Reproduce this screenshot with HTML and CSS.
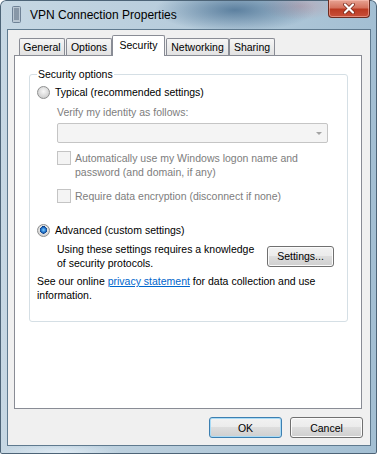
FILE: index.html
```html
<!DOCTYPE html>
<html lang="en">
<head>
    <meta charset="UTF-8">
    <title>VPN Connection Properties</title>
    <link rel="stylesheet" href="styles.css">
</head>
<body>
    <div class="window">
        <div class="titlebar">
            <svg class="title-icon" width="9" height="17" viewBox="0 0 9 17">
                <rect x="0.5" y="0.5" width="8" height="16" rx="1" fill="#b9c6d2" stroke="#6f8296"/>
                <path d="M2 3h5M2 5h5M2 7h5M2 9h5M2 11h5M2 13h5" stroke="#56697d" stroke-width="1"/>
            </svg>
            <span class="title-text">VPN Connection Properties</span>
            <div class="close-btn">
                <svg width="14" height="11" viewBox="0 0 14 11">
                    <path d="M3 1.5l8 8M11 1.5l-8 8" stroke="#7a2a1c" stroke-width="3.8" stroke-linecap="round"/>
                    <path d="M3 1.5l8 8M11 1.5l-8 8" stroke="#ffffff" stroke-width="2.2" stroke-linecap="round"/>
                </svg>
            </div>
        </div>

        <div class="client">
            <!-- Tab strip -->
            <div class="tabs">
                <div class="tab tab-general">General</div>
                <div class="tab tab-options">Options</div>
                <div class="tab tab-security active">Security</div>
                <div class="tab tab-networking">Networking</div>
                <div class="tab tab-sharing">Sharing</div>
            </div>

            <div class="panel">
                <fieldset class="group">
                    <legend>Security options</legend>

                    <div class="option">
                        <span class="radio"></span>
                        <span>Typical (recommended settings)</span>
                    </div>

                    <div class="sub">
                        <div class="label disabled">Verify my identity as follows:</div>
                        <div class="select"><span class="arrow"></span></div>

                        <div class="check-row first-check">
                            <span class="checkbox"></span>
                            <span class="disabled">Automatically use my Windows logon name and<br>password (and domain, if any)</span>
                        </div>

                        <div class="check-row second-check">
                            <span class="checkbox"></span>
                            <span class="disabled">Require data encryption (disconnect if none)</span>
                        </div>
                    </div>

                    <div class="option advanced">
                        <span class="radio checked"></span>
                        <span>Advanced (custom settings)</span>
                    </div>

                    <div class="sub settings-row">
                        <div>Using these settings requires a knowledge<br>of security protocols.</div>
                        <button class="btn settings-btn">Settings...</button>
                    </div>

                    <p class="note">See our online <a href="#">privacy statement</a> for data collection and use<br>information.</p>
                </fieldset>
            </div>

            <div class="buttons">
                <button class="btn default">OK</button>
                <button class="btn">Cancel</button>
            </div>
        </div>
    </div>
</body>
</html>
```

FILE: styles.css
```css
body {
    margin: 0;
    padding: 0;
    font-family: "Liberation Sans", Arial, sans-serif;
    font-size: 10.5px;
    color: #000;
}

/* Glass frame */
.window {
    width: 377px;
    height: 454px;
    box-sizing: border-box;
    padding: 0 6px 8px 7px;
    border-radius: 6px 6px 2px 2px;
    background:
        radial-gradient(ellipse 80px 22px at 235px 10px, rgba(64, 104, 140, 0.75), rgba(64, 104, 140, 0)),
        radial-gradient(ellipse 40px 14px at 300px 6px, rgba(200, 120, 130, 0.35), rgba(200, 120, 130, 0)),
        radial-gradient(ellipse 60px 8px at 60px 452px, rgba(230, 240, 248, 0.8), rgba(230, 240, 248, 0)),
        linear-gradient(to right, #c6d7e3, #b8cddc 45%, #a3bfd3);
    box-shadow: inset 0 0 0 1px #4d6477;
    display: flex;
    flex-direction: column;
}

.titlebar {
    height: 29px;
    display: flex;
    align-items: center;
    padding-left: 5px;
}

.title-icon {
    margin-top: -1px;
}

.title-text {
    font-size: 12px;
    margin-left: 9px;
    color: #000;
}

.close-btn {
    margin-left: auto;
    margin-right: 1px;
    align-self: flex-start;
    width: 42px;
    height: 18px;
    box-sizing: border-box;
    border: 1px solid #6d2b20;
    border-top: none;
    border-radius: 0 0 4px 4px;
    background: linear-gradient(#e7a393 0%, #d5735f 45%, #bb3a22 55%, #c9503a 100%);
    box-shadow: inset 0 0 0 1px rgba(255, 200, 190, 0.5);
    display: flex;
    align-items: center;
    justify-content: center;
}

/* Client area */
.client {
    flex: 1;
    background-color: #f0f0f0;
    border: 1px solid #5f7a8f;
    display: flex;
    flex-direction: column;
}

.tabs {
    display: flex;
    align-items: flex-end;
    height: 21px;
    margin-top: 5px;
    padding-left: 11px;
}

.tab {
    height: 17px;
    box-sizing: border-box;
    border: 1px solid #898c95;
    border-bottom: none;
    border-radius: 2px 2px 0 0;
    background: linear-gradient(#f6f6f6, #e2e2e2);
    display: flex;
    align-items: center;
    justify-content: center;
    margin-bottom: 1px;
}

.tab-general { width: 46px; margin-right: 1px; }
.tab-options { width: 46px; }
.tab-security { width: 53px; }
.tab-networking { width: 63px; margin-left: 1px; }
.tab-sharing { width: 46px; }

.tab.active {
    height: 21px;
    margin-bottom: 0;
    background: #fff;
    position: relative;
    z-index: 1;
    padding-bottom: 3px;
}

.panel {
    height: 354px;
    box-sizing: border-box;
    margin: -1px 8px 0 6px;
    background: #fff;
    border: 1px solid #898c95;
    padding: 12px 13px 0 14px;
}

/* Group box */
.group {
    margin: 0;
    padding: 0 13px 19px 7px;
    border: 1px solid #d5dfe5;
    border-radius: 3px;
}

.group legend {
    padding: 0 1px;
    line-height: 13px;
}

.option {
    display: flex;
    align-items: center;
    height: 14px;
    margin-top: 4px;
}

.option.advanced {
    margin-top: 20px;
}

.radio {
    width: 13px;
    height: 13px;
    box-sizing: border-box;
    border-radius: 50%;
    border: 1px solid #8e8f8f;
    background: radial-gradient(circle at 50% 40%, #f8f8f8, #d2d2d2 70%, #c3c3c3);
    margin-right: 5px;
    flex-shrink: 0;
}

.radio.checked {
    background:
        radial-gradient(circle at 50% 45%, #7fd0ff 0, #2a7bd0 2.2px, #0d3f86 3.6px, rgba(0, 0, 0, 0) 3.8px),
        radial-gradient(circle at 50% 40%, #f8f8f8, #d6d6d6 70%, #c3c3c3);
}

.sub {
    margin-left: 20px;
    line-height: 14px;
}

.label {
    margin-top: 6px;
}

.disabled {
    color: #7d7d7d;
}

.select {
    position: relative;
    height: 20px;
    box-sizing: border-box;
    margin: 4px 6px 0 0;
    border: 1px solid #c5c5c5;
    border-radius: 2px;
    background: #f4f4f4;
}

.select .arrow {
    position: absolute;
    right: 5px;
    top: 8px;
    border-left: 3px solid transparent;
    border-right: 3px solid transparent;
    border-top: 3px solid #a3a3a3;
}

.check-row {
    display: flex;
    align-items: flex-start;
}

.first-check {
    margin-top: 8px;
}

.second-check {
    margin-top: 10px;
}

.checkbox {
    width: 12px;
    height: 12px;
    border: 1px solid #c4c4c4;
    background: #f4f4f4;
    margin: 0 4px 0 0;
    flex-shrink: 0;
}

.settings-row {
    display: flex;
    justify-content: space-between;
    align-items: center;
    margin-top: 5px;
}

.btn {
    font-family: "Liberation Sans", Arial, sans-serif;
    font-size: 10.5px;
    color: #000;
    border: 1px solid #707070;
    border-radius: 3px;
    background: linear-gradient(#f2f2f2 0%, #ebebeb 50%, #dddddd 50%, #cfcfcf 100%);
    box-shadow: inset 0 0 0 1px #fbfbfb;
    padding: 0;
}

.settings-btn {
    width: 67px;
    height: 21px;
}

.note {
    margin: 4px 0 0 0;
    line-height: 14px;
}

.note a {
    color: #0066cc;
}

/* Dialog buttons */
.buttons {
    display: flex;
    justify-content: flex-end;
    gap: 8px;
    margin: 8px 7px 0 0;
}

.buttons .btn {
    width: 73px;
    height: 21px;
}

.btn.default {
    border-color: #3c7fb1;
    box-shadow: inset 0 0 0 1px #a9dbf6;
}
```
